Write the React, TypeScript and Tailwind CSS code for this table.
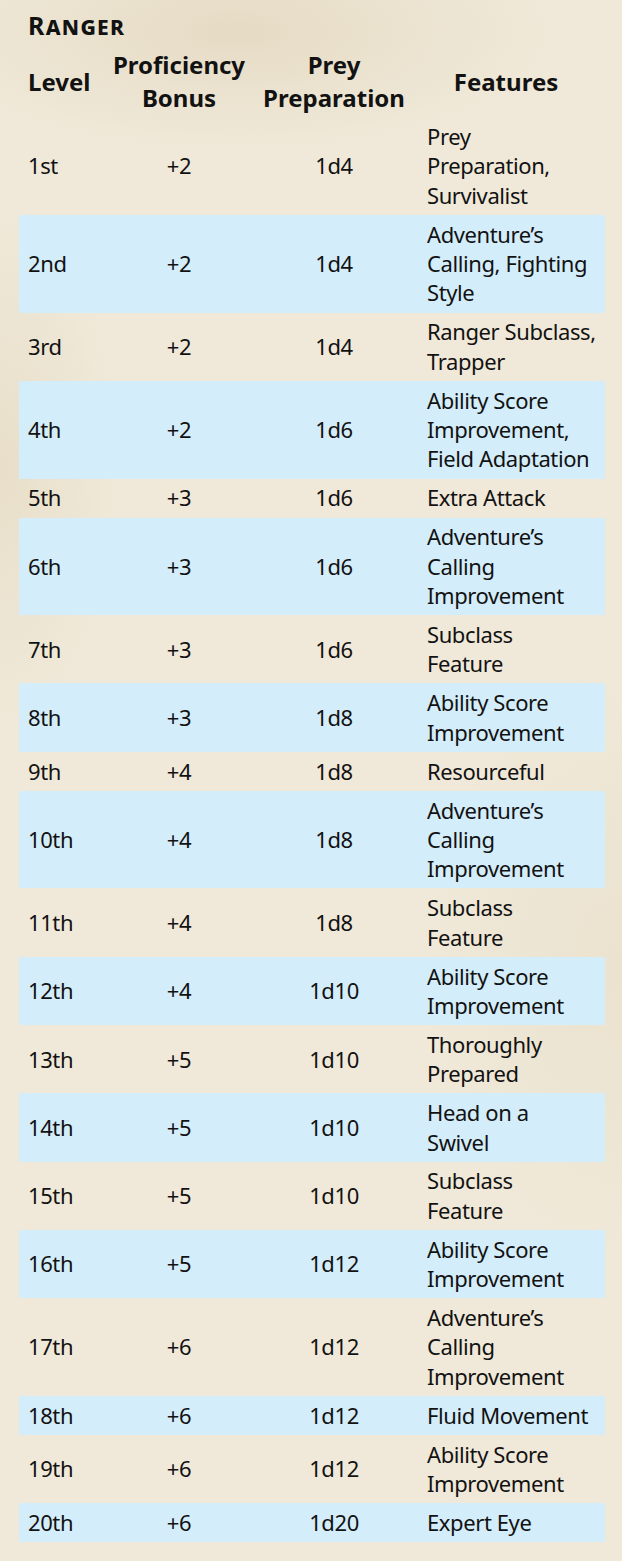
import React from "react";

type Row = { level: string; prof: string; prey: string; features: string[] };

const rows: Row[] = [
  { level: "1st", prof: "+2", prey: "1d4", features: ["Prey", "Preparation,", "Survivalist"] },
  { level: "2nd", prof: "+2", prey: "1d4", features: ["Adventure’s", "Calling, Fighting", "Style"] },
  { level: "3rd", prof: "+2", prey: "1d4", features: ["Ranger Subclass,", "Trapper"] },
  { level: "4th", prof: "+2", prey: "1d6", features: ["Ability Score", "Improvement,", "Field Adaptation"] },
  { level: "5th", prof: "+3", prey: "1d6", features: ["Extra Attack"] },
  { level: "6th", prof: "+3", prey: "1d6", features: ["Adventure’s", "Calling", "Improvement"] },
  { level: "7th", prof: "+3", prey: "1d6", features: ["Subclass", "Feature"] },
  { level: "8th", prof: "+3", prey: "1d8", features: ["Ability Score", "Improvement"] },
  { level: "9th", prof: "+4", prey: "1d8", features: ["Resourceful"] },
  { level: "10th", prof: "+4", prey: "1d8", features: ["Adventure’s", "Calling", "Improvement"] },
  { level: "11th", prof: "+4", prey: "1d8", features: ["Subclass", "Feature"] },
  { level: "12th", prof: "+4", prey: "1d10", features: ["Ability Score", "Improvement"] },
  { level: "13th", prof: "+5", prey: "1d10", features: ["Thoroughly", "Prepared"] },
  { level: "14th", prof: "+5", prey: "1d10", features: ["Head on a", "Swivel"] },
  { level: "15th", prof: "+5", prey: "1d10", features: ["Subclass", "Feature"] },
  { level: "16th", prof: "+5", prey: "1d12", features: ["Ability Score", "Improvement"] },
  { level: "17th", prof: "+6", prey: "1d12", features: ["Adventure’s", "Calling", "Improvement"] },
  { level: "18th", prof: "+6", prey: "1d12", features: ["Fluid Movement"] },
  { level: "19th", prof: "+6", prey: "1d12", features: ["Ability Score", "Improvement"] },
  { level: "20th", prof: "+6", prey: "1d20", features: ["Expert Eye"] },
];

export default function App() {
  return (
    <div className="min-h-[1561px] w-full bg-[#f0e9d9] bg-[radial-gradient(320px_120px_at_38%_2%,rgba(214,198,166,0.4)_0%,rgba(214,198,166,0)_100%),radial-gradient(120px_260px_at_0%_30%,rgba(214,198,166,0.3)_0%,rgba(214,198,166,0)_100%),radial-gradient(200px_300px_at_100%_62%,rgba(214,198,166,0.2)_0%,rgba(214,198,166,0)_100%)] font-['Noto_Sans',sans-serif] text-[#121212]">
      <div className="pl-[19px] pr-[17px] pt-[10px]">
        <h2 className="pl-[9px] text-[25px] leading-[30px] font-bold tracking-[1.3px] [font-variant-caps:small-caps]">
          Ranger
        </h2>

        <div className="grid grid-cols-[85px_150px_160px_1fr] pt-[8px] pb-[3.3px] text-[24px] leading-[33px] font-bold">
          <div className="flex items-center pl-[9px]">Level</div>
          <div className="flex flex-col items-center justify-center text-center">
            <span>Proficiency</span>
            <span>Bonus</span>
          </div>
          <div className="flex flex-col items-center justify-center text-center">
            <span>Prey</span>
            <span>Preparation</span>
          </div>
          <div className="flex items-center justify-center pr-[7px]">Features</div>
        </div>

        <div className="flex flex-col text-[22px] leading-[29.33px] tracking-[-0.4px]">
          {rows.map((r, i) => (
            <div
              key={r.level}
              className={
                "grid grid-cols-[85px_150px_160px_1fr] py-[4.84px] " +
                (i % 2 === 1 ? "bg-[#d4edfa]" : "")
              }
            >
              <div className="flex items-center pl-[9px]">{r.level}</div>
              <div className="flex items-center justify-center">{r.prof}</div>
              <div className="flex items-center justify-center">{r.prey}</div>
              <div className="flex flex-col justify-center pl-[13px]">
                {r.features.map((f) => (
                  <span key={f} className="whitespace-nowrap">
                    {f}
                  </span>
                ))}
              </div>
            </div>
          ))}
        </div>
      </div>
    </div>
  );
}
